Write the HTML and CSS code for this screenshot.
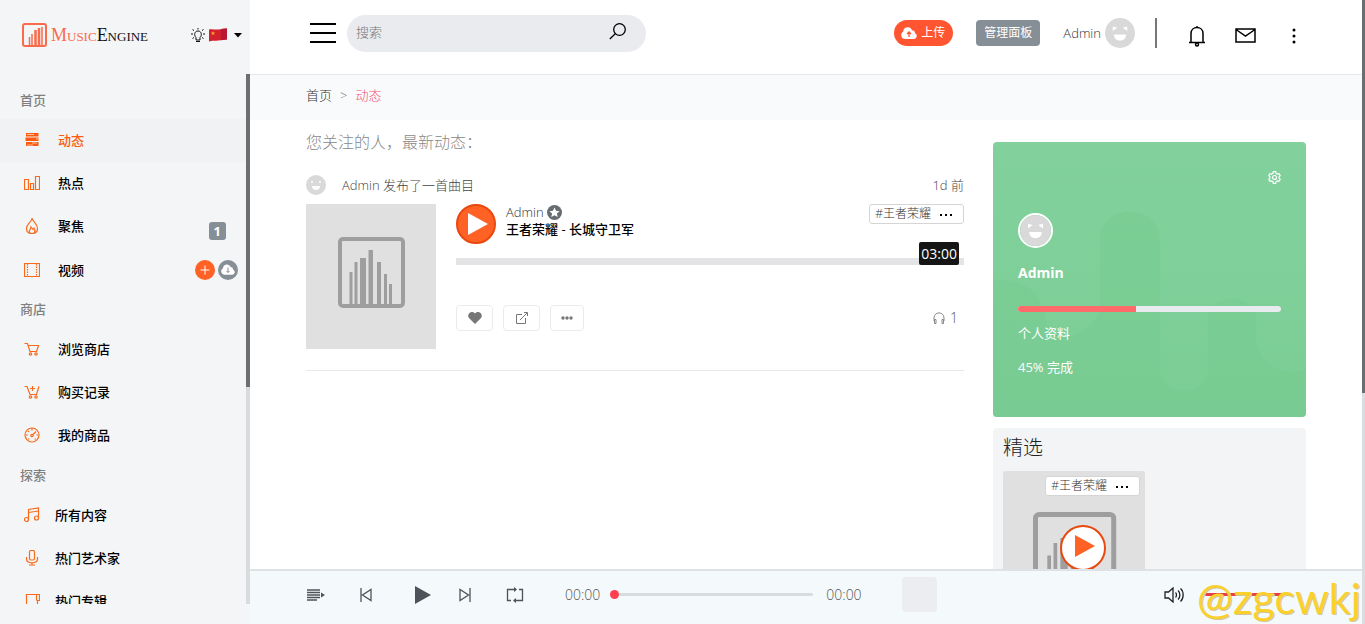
FILE: index.html
```html
<!DOCTYPE html>
<html lang="zh-CN">
<head>
  <meta charset="UTF-8">
  <meta name="viewport" content="width=device-width, initial-scale=1.0">
  <title>MusicEngine - 动态</title>
  <link rel="stylesheet" href="styles.css">
</head>
<body>
  <svg class="sprite" aria-hidden="true">
    <symbol id="avatar" viewBox="0 0 30 30">
      <circle cx="15" cy="15" r="15" fill="#d9d9d9"/>
      <path d="M8.500 9.500l2 .5-2 1.500zM21.500 9.500l-2 .5 2 1.500z" fill="#fff" stroke="#fff" stroke-width="1.500"/>
      <path d="M9 16.500h12c0 4-2.500 6-6 6s-6-2-6-6z" fill="#fff"/>
    </symbol>
    <symbol id="cover" viewBox="0 0 130 145">
      <rect width="130" height="145" fill="#e0e0e0"/>
      <rect x="34" y="35" width="63" height="67" rx="3" fill="none" stroke="#9e9e9e" stroke-width="4"/>
      <path d="M43.500 68h3v33h-3zM48.500 58h3v43h-3zM54 54h6v47h-6zM62.500 46h4.500v55h-4.500zM71 58h4v43h-4zM78 70h3v31h-3zM83 80h3v21h-3z" fill="#9e9e9e"/>
    </symbol>
    <symbol id="cloud" viewBox="0 0 16 12">
      <path d="M4 12a4 4 0 0 1-1.700-7.500A4.500 4.500 0 0 1 11 3.200 3.200 3.200 0 0 1 14 6.300 3 3 0 0 1 13 12z"/>
    </symbol>
  </svg>

  <aside class="sidebar">
    <div class="sidebar-top">
      <a class="logo" href="#">
        <svg width="25" height="25" viewBox="0 0 25 25" fill="none" stroke="#fa6a4b">
          <rect x="1" y="1" width="23" height="22" rx="2" stroke-width="2"/>
          <path d="M7.500 22v-8M10 22V11" stroke-width="1.500"/>
          <path d="M13.500 22V7M17 22V5" stroke-width="2.500"/>
          <path d="M20 22V4" stroke-width="1.500"/>
        </svg>
        <span class="logo-text"><span class="logo-accent">Music</span>Engine</span>
      </a>
      <button class="icon-btn" aria-label="切换主题">
        <svg width="14" height="14" viewBox="0 0 14 14" fill="none" stroke="#111">
          <path d="M5 9.500C3 8 3 3 7 3s4 5 2 6.500V12H5zM5 13.500h4M7 0v1.500M0 6h2M12 6h2M1.500 1.500l1.500 1M12.500 1.500l-1.500 1M1.500 10.500l1.500-1M12.500 10.500l-1.500-1"/>
        </svg>
      </button>
      <button class="icon-btn lang-btn" aria-label="语言">
        <svg width="18" height="14" viewBox="0 0 18 14">
          <path d="M0 1.500c3-1 5 .5 9 0s6-1 9-1v11c-3 0-5 .5-9 1s-6-.5-9 1z" fill="#d3202f"/>
          <path d="M12 1l6-.5v11l-6 .8z" fill="#b81832"/>
          <path d="M4 3l.6 1.500 1.600.1-1.200 1 .4 1.600L4 6.300l-1.400.9.400-1.600-1.200-1 1.600-.1z" fill="#f5a623"/>
        </svg>
        <svg width="8" height="5" viewBox="0 0 8 5"><path d="M0 0h8L4 4.500z" fill="#000"/></svg>
      </button>
    </div>

    <nav class="nav">
      <h2 class="nav-title">首页</h2>
      <a class="nav-item active" href="#">
        <svg class="nav-icon" viewBox="0 0 16 16" fill="#fa5b0f"><path d="M2 1h12.500v3.500H2zM1.500 5.500h13v3.500h-13zM2 10h12.500v4H2z"/><path d="M3 2.500h7M8 11h5M3 13h6M12 7h2" stroke="#fdd9c8" stroke-width=".8"/></svg>
        <span>动态</span>
      </a>
      <a class="nav-item" href="#">
        <svg class="nav-icon" viewBox="0 0 16 16"><path d="M.5 4.500h4v10h-4zM6.500 8.500h3v6h-3zM11.500 1.500h4v13h-4z"/></svg>
        <span>热点</span>
      </a>
      <a class="nav-item" href="#">
        <svg class="nav-icon" viewBox="0 0 16 16"><path d="M8 .5C7.500 4 2.500 6 2.500 10.500c0 3 2 5 5.500 5s5.500-2 5.500-5C13.500 6 9.500 4 8 .5z"/><path d="M5.500 15c-1-3 1.500-4 1.500-6l2 2.500 1-1.500c1.500 2 1 4 .5 5"/></svg>
        <span>聚焦</span>
        <span class="badge">1</span>
      </a>
      <a class="nav-item tight" href="#">
        <svg class="nav-icon" viewBox="0 0 16 16"><path d="M.5 1.500h15v13H.5z"/><path d="M3.500 2v12M12.500 2v12" stroke-dasharray="1.500 1"/></svg>
        <span>视频</span>
        <span class="round-tags">
          <svg width="20" height="20" viewBox="0 0 20 20"><circle cx="10" cy="10" r="10" fill="#ff6224"/><path d="M10 5.500v9M5.500 10h9" stroke="#fff"/></svg>
          <svg width="20" height="20" viewBox="0 0 20 20"><circle cx="10" cy="10" r="10" fill="#868e96"/><use href="#cloud" x="3" y="4" width="14" height="11" fill="#fff"/><path d="M10 7.500v5M8.500 11l1.500 1.500 1.500-1.500" stroke="#868e96" fill="none"/></svg>
        </span>
      </a>
      <h2 class="nav-title">商店</h2>
      <a class="nav-item" href="#">
        <svg class="nav-icon" viewBox="0 0 16 16"><path d="M.5 2.500h3l2.500 8h7M4 4.500h10.500l-2 6"/><circle cx="6.500" cy="13" r="1.200"/><circle cx="12" cy="13" r="1.200"/></svg>
        <span>浏览商店</span>
      </a>
      <a class="nav-item" href="#">
        <svg class="nav-icon" viewBox="0 0 16 16"><path d="M.5 2.500h2.500l3 8h6.500l2.500-8M8.500 2v5M6 4.500h5"/><circle cx="6.500" cy="13" r="1.200"/><circle cx="12" cy="13" r="1.200"/></svg>
        <span>购买记录</span>
      </a>
      <a class="nav-item" href="#">
        <svg class="nav-icon" viewBox="0 0 16 16"><circle cx="8" cy="8" r="7"/><circle cx="8" cy="8.500" r="1.200"/><path d="M9 7.500l3-3M8 1v2.500M2 8h2M12.500 8H14M4 4l1 1M4 12h1.500M10.500 12H12"/></svg>
        <span>我的商品</span>
      </a>
      <h2 class="nav-title">探索</h2>
      <a class="nav-item narrow" href="#">
        <svg class="nav-icon" viewBox="0 0 16 16"><circle cx="2.500" cy="12.500" r="2"/><circle cx="12.500" cy="11" r="2"/><path d="M4.500 12.500V2.500l10-1.500V11M4.500 5.500l10-1.500"/></svg>
        <span>所有内容</span>
      </a>
      <a class="nav-item narrow" href="#">
        <svg class="nav-icon" viewBox="0 0 16 16"><rect x="5.500" y=".5" width="5" height="9.500" rx="1.500"/><path d="M2.500 7v2c0 5 11 5 11 0V7M8 12.500v2M5 15h6"/></svg>
        <span>热门艺术家</span>
      </a>
      <a class="nav-item narrow" href="#">
        <svg class="nav-icon" viewBox="0 0 16 16"><path d="M2.500 15.500V1.500h13v6h-2v8M12.500 1.500v6"/></svg>
        <span>热门专辑</span>
      </a>
    </nav>
    <div class="nav-scroll"></div>
  </aside>

  <div class="page">
    <header class="header">
      <button class="icon-btn" aria-label="菜单">
        <svg width="26" height="20" viewBox="0 0 26 20" stroke="#000" stroke-width="2"><path d="M0 1h26M0 10h26M0 19h26"/></svg>
      </button>
      <form class="search">
        <input class="search-input" type="search" placeholder="搜索" aria-label="搜索">
        <button class="icon-btn" type="button" aria-label="开始搜索">
          <svg width="18" height="18" viewBox="0 0 18 18" fill="none" stroke="#000" stroke-width="1.300"><circle cx="10.500" cy="6.500" r="5.800"/><path d="M6.500 10.500L.8 16"/></svg>
        </button>
      </form>
      <button class="upload-btn">
        <svg width="16" height="12" viewBox="0 0 16 12"><use href="#cloud" fill="#fff"/><path d="M8 10V5M6 7l2-2 2 2" fill="none" stroke="#ff5531" stroke-width="1.300"/></svg>
        上传
      </button>
      <button class="panel-btn">管理面板</button>
      <a class="user" href="#">Admin <svg width="30" height="30"><use href="#avatar"/></svg></a>
      <span class="separator"></span>
      <div class="header-icons">
        <button class="icon-btn" aria-label="通知">
          <svg width="18" height="22" viewBox="0 0 18 22" fill="none" stroke="#000" stroke-width="1.500"><path d="M1 17.500h16M3 17V8.500C3 .5 15 .5 15 8.500V17M9 2.500V1"/><circle cx="9" cy="19.500" r="1.500"/></svg>
        </button>
        <button class="icon-btn" aria-label="消息">
          <svg width="21" height="15" viewBox="0 0 21 15" fill="none" stroke="#000" stroke-width="1.500"><path d="M1 1h19v13H1zM1 1.500l9.500 6.500L20 1.500"/></svg>
        </button>
        <button class="icon-btn" aria-label="更多">
          <svg width="18" height="16" viewBox="0 0 18 16"><circle cx="9" cy="2" r="1.500"/><circle cx="9" cy="8" r="1.500"/><circle cx="9" cy="14" r="1.500"/></svg>
        </button>
      </div>
    </header>

    <nav class="breadcrumb" aria-label="面包屑">
      <a href="#">首页</a>
      <span class="sep">&gt;</span>
      <a class="current" href="#">动态</a>
    </nav>

    <main class="content">
      <section class="feed">
        <h1 class="feed-title">您关注的人，最新动态：</h1>
        <article class="post">
          <div class="post-head">
            <svg width="20" height="20"><use href="#avatar"/></svg>
            <span class="post-action">Admin 发布了一首曲目</span>
            <span class="post-time">1d 前</span>
          </div>
          <div class="track">
            <svg class="track-cover" viewBox="0 0 130 145"><use href="#cover"/></svg>
            <div class="track-body">
              <div class="track-head">
                <button class="play-btn" aria-label="播放">
                  <svg width="20" height="22" viewBox="0 0 20 22"><path d="M0 0l20 11L0 22z" fill="#fff"/></svg>
                </button>
                <div class="track-info">
                  <a class="artist" href="#">Admin
                    <svg width="15" height="15" viewBox="0 0 15 15"><circle cx="7.500" cy="7.500" r="7.500" fill="#666c70"/><path d="M7.500 2.500l1.500 3.300 3.600.4-2.700 2.400.8 3.500-3.200-1.800-3.200 1.800.8-3.500-2.700-2.400 3.600-.4z" fill="#fff"/></svg>
                  </a>
                  <a class="song" href="#">王者荣耀 - 长城守卫军</a>
                </div>
                <div class="tag"><a href="#">#王者荣耀</a><button class="tag-more" aria-label="更多标签"><svg width="12" height="2" viewBox="0 0 12 2"><path d="M0 0h2v2H0zM5 0h2v2H5zM10 0h2v2h-2z"/></svg></button></div>
              </div>
              <div class="wave"><span class="duration">03:00</span></div>
              <div class="actions">
                <button class="action-btn" aria-label="喜欢">
                  <svg width="14" height="12" viewBox="0 0 14 12"><path d="M7 12L1 6C-2 2 4-2.500 7 1.500 10-2.500 16 2 13 6z" fill="#777"/></svg>
                </button>
                <button class="action-btn" aria-label="分享">
                  <svg width="12" height="12" viewBox="0 0 12 12" fill="none" stroke="#777"><path d="M6 2.500H.5v9h9V6M4 8l7-7M8 .5h3.500V4"/></svg>
                </button>
                <button class="action-btn small" aria-label="更多">
                  <svg width="12" height="4" viewBox="0 0 12 4" fill="#777"><circle cx="2" cy="2" r="1.700"/><circle cx="6" cy="2" r="1.700"/><circle cx="10" cy="2" r="1.700"/></svg>
                </button>
                <span class="plays">
                  <svg width="12" height="12" viewBox="0 0 12 12" fill="none" stroke="#888"><path d="M1 9V6C1-.8 11-.8 11 6v3M1.500 7.500h1.500v4H1.500zM9 7.500h1.500v4H9z"/></svg>
                  1
                </span>
              </div>
            </div>
          </div>
        </article>
      </section>

      <aside class="side">
        <section class="profile">
          <svg class="profile-art" viewBox="0 0 313 275" preserveAspectRatio="none">
            <path d="M0 138c30 0 45 10 50 30 6 40 45 30 57 0V98c0-38 60-38 60 0v130c0 28 48 28 48 0v-50c0-28 48-28 48 0v20c5 30 30 35 50 30v47H0z" fill="#76c98f" opacity=".45"/>
          </svg>
          <button class="icon-btn profile-gear" aria-label="设置">
            <svg width="13" height="13" viewBox="0 0 13 13" fill="none" stroke="#fff" stroke-width="1.200"><path d="M5.300.7h2.400l.4 1.700 1.300.7 1.600-.5 1.200 2.100-1.200 1.200v1.200l1.200 1.200-1.200 2.100-1.600-.5-1.300.7-.4 1.700H5.300l-.4-1.700-1.300-.7-1.600.5L.8 8.300 2 7.100V5.900L.8 4.700 2 2.600l1.600.5 1.300-.7z"/><circle cx="6.500" cy="6.500" r="2"/></svg>
          </button>
          <svg class="profile-avatar"><use href="#avatar"/></svg>
          <h2 class="profile-name">Admin</h2>
          <div class="progress" role="progressbar" aria-valuenow="45" aria-label="个人资料"><div class="progress-bar" style="width: 45%"></div></div>
          <p class="profile-text">个人资料</p>
          <p class="profile-text">45% 完成</p>
        </section>
        <section class="featured">
          <h2 class="featured-title">精选</h2>
          <div class="tile">
            <svg class="tile-cover" viewBox="0 0 130 145" preserveAspectRatio="xMidYMid slice"><use href="#cover" width="130" height="145"/></svg>
            <div class="tag tile-tag"><a href="#">#王者荣耀</a><button class="tag-more" aria-label="更多标签"><svg width="12" height="2" viewBox="0 0 12 2"><path d="M0 0h2v2H0zM5 0h2v2H5zM10 0h2v2h-2z"/></svg></button></div>
            <button class="tile-play" aria-label="播放">
              <svg width="20" height="22" viewBox="0 0 20 22"><path d="M0 0l20 11L0 22z" fill="#ff6224"/></svg>
            </button>
          </div>
        </section>
      </aside>
    </main>

    <footer class="player">
      <div class="player-controls">
        <button class="icon-btn" aria-label="播放列表"><svg width="18" height="12" viewBox="0 0 18 12" stroke="#4d5459" stroke-width="1.500"><path d="M0 1h13M0 3.500h13M0 6h13M0 8.500h13M0 11h10"/><path d="M14 3.500l4 2.500-4 2.500z" fill="#4d5459" stroke="none"/></svg></button>
        <button class="icon-btn prev" aria-label="上一首"><svg width="12" height="14" viewBox="0 0 12 14" fill="none" stroke="#4d5459" stroke-width="1.300"><path d="M1 0v14M11 1.500v11L2.500 7z"/></svg></button>
        <button class="icon-btn play" aria-label="播放"><svg width="16" height="18" viewBox="0 0 16 18"><path d="M0 0l16 9-16 9z" fill="#4d5459"/></svg></button>
        <button class="icon-btn" aria-label="下一首"><svg width="12" height="14" viewBox="0 0 12 14" fill="none" stroke="#4d5459" stroke-width="1.300"><path d="M11 0v14M1 1.500v11L9.500 7z"/></svg></button>
        <button class="icon-btn" aria-label="循环"><svg width="18" height="16" viewBox="0 0 18 16" fill="none" stroke="#4d5459" stroke-width="1.300"><path d="M5 13.500H1.500v-11H10M13 2.500h3.500v11H8"/><path d="M8 0l3 2.500L8 5zM10 11l-3 2.500 3 2.500z" fill="#4d5459" stroke="none"/></svg></button>
      </div>
      <span class="time">00:00</span>
      <input class="seek" type="range" min="0" max="100" value="0" aria-label="进度">
      <span class="time">00:00</span>
      <div class="player-cover"></div>
      <button class="icon-btn volume-btn" aria-label="音量"><svg width="20" height="16" viewBox="0 0 20 16" fill="none" stroke="#222" stroke-width="1.300"><path d="M1 5h3.500L9 1v14l-4.500-4H1zM11.500 5.500c1.300 1 1.300 4 0 5M14 3.500c2.500 2 2.500 7 0 9M16.500 1.500c3.500 3 3.500 10 0 13"/></svg></button>
      <input class="volume" type="range" min="0" max="100" value="100" aria-label="音量大小">
      <span class="watermark">@zgcwkj</span>
    </footer>
  </div>
  <div class="page-scroll"></div>
</body>
</html>
```
FILE: styles.css
```css
* {
  box-sizing: border-box;
}
body {
  margin: 0;
  display: grid;
  grid-template-columns: 250px minmax(0, 1fr);
  height: 100vh;
  overflow: hidden;
  position: relative;
  font-family: "Open Sans", "Noto Sans CJK SC", sans-serif;
  font-size: 13px;
  font-weight: 300;
  line-height: 20px;
  color: #333;
  background-color: #fff;
}
h1, h2, p {
  margin: 0;
}
a {
  color: inherit;
  text-decoration: none;
}
svg {
  display: block;
  flex-shrink: 0;
}
button, input {
  font: inherit;
  color: inherit;
}
button {
  cursor: pointer;
}
.sprite {
  position: absolute;
  width: 0;
  height: 0;
}
.icon-btn {
  display: flex;
  align-items: center;
  padding: 0;
  border: none;
  background: none;
}

/* Sidebar */
.sidebar {
  position: relative;
  display: flex;
  flex-direction: column;
  min-height: 0;
  padding-bottom: 20px;
  background-color: #f3f5f7;
}
.sidebar-top {
  display: flex;
  align-items: center;
  gap: 4px;
  height: 74px;
  padding: 0 8px 4px 22px;
  flex-shrink: 0;
}
.logo {
  display: flex;
  align-items: center;
  gap: 4px;
  margin-right: auto;
}
.logo-text {
  font-family: "Liberation Serif", serif;
  font-size: 18px;
  font-weight: 400;
  font-variant: small-caps;
  color: #111;
}
.logo-accent {
  color: #fa6a4b;
}
.lang-btn {
  gap: 7px;
}
.nav {
  flex: 1;
  min-height: 0;
  overflow: hidden;
  padding-top: 8px;
}
.nav-title {
  padding-left: 20px;
  font-size: 13px;
  font-weight: 500;
  line-height: 37px;
  color: #808080;
}
.nav-item {
  display: flex;
  align-items: center;
  gap: 18px;
  height: 43px;
  padding: 0 24px 2px;
  font-weight: 500;
  color: #000;
}
.nav-item.tight {
  padding: 0 12px 0 24px;
}
.nav-item.narrow {
  gap: 15px;
}
.nav-item.active {
  color: #fa5b0f;
  background-color: #f1f2f4;
}
.nav-icon {
  width: 16px;
  height: 16px;
  fill: none;
  stroke: #fa6a1b;
  stroke-width: 1.2;
}
.active .nav-icon {
  fill: #fa5b0f;
  stroke: none;
}
.badge {
  margin: 10px 0 0 auto;
  padding: 0 5px;
  font-weight: 700;
  line-height: 18px;
  color: #fff;
  background-color: #868e96;
  border-radius: 3px;
}
.round-tags {
  display: flex;
  gap: 3px;
  margin-left: auto;
}
.nav-scroll {
  position: absolute;
  top: 74px;
  right: 0;
  bottom: 20px;
  width: 4px;
  background: linear-gradient(#6b6f72 59%, #d9dbdd 59%);
}

/* Header */
.page {
  display: flex;
  flex-direction: column;
  min-width: 0;
  min-height: 0;
}
.header {
  display: flex;
  align-items: center;
  flex-shrink: 0;
  height: 75px;
  padding: 0 62px 8px 60px;
  border-bottom: 1px solid #e6e8ea;
}
.search {
  display: flex;
  align-items: center;
  width: 299px;
  height: 37px;
  margin: 0 auto 0 11px;
  padding: 0 19px 2px 9px;
  background-color: #e9ebee;
  border-radius: 19px;
}
.search-input {
  flex: 1;
  min-width: 0;
  padding: 0;
  border: none;
  outline: none;
  background: none;
}
.search-input::placeholder {
  color: #777;
}
.upload-btn {
  display: flex;
  align-items: center;
  gap: 4px;
  height: 26px;
  margin-right: 23px;
  padding: 0 8px 0 7px;
  border: none;
  border-radius: 13px;
  font-size: 12px;
  font-weight: 400;
  color: #fff;
  background-color: #ff5531;
}
.panel-btn {
  height: 26px;
  margin-right: 23px;
  padding: 0 8px;
  border: none;
  border-radius: 4px;
  font-size: 12px;
  font-weight: 400;
  color: #fff;
  background-color: #868e96;
}
.user {
  display: flex;
  align-items: center;
  gap: 4px;
}
.separator {
  width: 2px;
  height: 30px;
  margin: 0 31px 0 20px;
  background-color: #777;
}
.header-icons {
  display: flex;
  align-items: center;
  gap: 29px;
  padding-top: 5px;
}

/* Breadcrumb */
.breadcrumb {
  display: flex;
  gap: 8px;
  flex-shrink: 0;
  padding: 10px 56px 15px;
  background-color: #f9fafc;
}
.breadcrumb .sep {
  color: #777;
}
.breadcrumb .current {
  color: #f0506e;
}

/* Content */
.content {
  flex: 1;
  display: grid;
  grid-template-columns: minmax(0, 1fr) 313px;
  align-items: start;
  gap: 29px;
  min-height: 0;
  padding: 12px 59px 0 56px;
  overflow: hidden;
}
.feed-title {
  font-size: 16px;
  font-weight: 300;
  line-height: 20px;
  color: #888;
}
.post {
  padding: 23px 0 21px;
  border-bottom: 1px solid #e8e8e8;
}
.post-head {
  display: flex;
  align-items: center;
  gap: 16px;
  margin-bottom: 9px;
  color: #444;
}
.post-time {
  margin-left: auto;
}
.track {
  display: flex;
  gap: 20px;
}
.track-cover {
  width: 130px;
  height: 145px;
}
.track-body {
  flex: 1;
  min-width: 0;
}
.track-head {
  display: flex;
  align-items: flex-start;
  gap: 10px;
}
.play-btn {
  display: flex;
  align-items: center;
  justify-content: center;
  width: 40px;
  height: 40px;
  padding: 0 0 0 4px;
  border: 2px solid #e8490f;
  border-radius: 50%;
  background-color: #ff6224;
}
.track-info {
  display: flex;
  flex-direction: column;
  flex: 1;
  line-height: 17px;
}
.artist {
  display: flex;
  align-items: center;
  gap: 3px;
}
.song {
  font-weight: 500;
  color: #000;
}
.tag {
  display: flex;
  align-items: center;
  gap: 9px;
  height: 20px;
  padding: 0 11px 0 5px;
  border: 1px solid #d5d5d5;
  border-radius: 3px;
  font-size: 12px;
  line-height: 18px;
  background-color: #fff;
}
.tag-more {
  padding: 2px 0 0;
  border: none;
  background: none;
}
.wave {
  position: relative;
  height: 7px;
  margin: 14px 0 40px;
  background-color: #e4e4e6;
}
.duration {
  position: absolute;
  right: 5px;
  bottom: 0;
  padding: 0 2px;
  font-size: 14px;
  font-weight: 400;
  line-height: 23px;
  color: #fff;
  background-color: #151515;
  border-radius: 2px;
}
.actions {
  display: flex;
  align-items: center;
  gap: 10px;
}
.action-btn {
  display: flex;
  align-items: center;
  justify-content: center;
  width: 37px;
  height: 26px;
  padding: 0;
  border: 1px solid #ebebeb;
  border-radius: 4px;
  background-color: #fff;
}
.action-btn.small {
  width: 34px;
}
.plays {
  display: flex;
  align-items: center;
  gap: 5px;
  margin-left: auto;
  padding-right: 6px;
  font-size: 14px;
  color: #555;
}

/* Right column */
.side {
  display: flex;
  flex-direction: column;
  gap: 11px;
  padding-top: 10px;
}
.profile {
  position: relative;
  padding: 29px 25px 40px;
  color: #fff;
  background: linear-gradient(#82d19d, #7bcd95);
  border-radius: 4px;
  overflow: hidden;
}
.profile > * {
  position: relative;
}
.profile > .profile-art {
  position: absolute;
  top: 0;
  left: 0;
  width: 100%;
  height: 100%;
}
.profile-gear {
  margin: 0 0 29px auto;
}
.profile-avatar {
  width: 35px;
  height: 35px;
  border: 2px solid #fff;
  border-radius: 50%;
}
.profile-name {
  margin: 15px 0 23px;
  font-size: 14px;
  font-weight: 700;
  line-height: 20px;
}
.progress {
  height: 6px;
  margin-bottom: 11px;
  border-radius: 3px;
  overflow: hidden;
  background-color: #e9ecef;
}
.progress-bar {
  height: 100%;
  background-color: #ff6b6b;
}
.profile-text {
  font-weight: 400;
}
.profile-text + .profile-text {
  margin-top: 14px;
}
.featured {
  padding: 8px 10px;
  background-color: #f2f4f6;
  border-radius: 4px;
}
.featured-title {
  margin-bottom: 11px;
  font-size: 20px;
  font-weight: 300;
  line-height: 24px;
  color: #222;
}
.tile {
  position: relative;
  width: 142px;
}
.tile-cover {
  width: 100%;
  height: 180px;
  border-radius: 3px;
}
.tile-tag {
  position: absolute;
  top: 5px;
  right: 5px;
}
.tile-play {
  position: absolute;
  top: 54px;
  left: 57px;
  display: flex;
  align-items: center;
  justify-content: center;
  width: 46px;
  height: 46px;
  padding: 0 0 4px 4px;
  border: 2px solid #e8490f;
  border-radius: 50%;
  background-color: #fff;
}
.page-scroll {
  position: absolute;
  top: 0;
  right: 0;
  bottom: 0;
  width: 3px;
  background: linear-gradient(#667070 63%, #d9dde0 63%);
}

/* Player */
.player {
  position: relative;
  display: flex;
  align-items: center;
  flex-shrink: 0;
  height: 55px;
  padding: 0 75px 6px 57px;
  border-top: 2px solid #dfe2e4;
  background-color: #f4f9fb;
}
.player-controls {
  display: flex;
  align-items: center;
  gap: 35px;
  margin-right: 41px;
}
.player-controls .prev {
  margin-right: 8px;
}
.player-controls .play {
  margin-right: -7px;
}
.time {
  font-size: 14px;
  color: #555;
}
.seek, .volume {
  appearance: none;
  height: 3px;
  margin: 0;
  border-radius: 2px;
}
.seek {
  width: 203px;
  margin: 0 13px 0 10px;
  background-color: #d9dcde;
}
.seek::-webkit-slider-thumb {
  appearance: none;
  width: 9px;
  height: 9px;
  border-radius: 50%;
  background-color: #ff4050;
}
.player-cover {
  width: 35px;
  height: 35px;
  margin: 0 auto 0 40px;
  border-radius: 4px;
  background-color: #ebedf0;
}
.volume-btn {
  margin-right: 21px;
}
.volume {
  width: 85px;
  background-color: #e93d45;
}
.volume::-webkit-slider-thumb {
  appearance: none;
  width: 3px;
  height: 3px;
  background-color: #e93d45;
}
.watermark {
  position: absolute;
  right: 4px;
  bottom: 2px;
  font-family: Lato, sans-serif;
  font-size: 43px;
  font-weight: 400;
  line-height: 48px;
  color: #fbd02c;
  text-shadow: 1px 1px 0 #cfc79a;
}
```
